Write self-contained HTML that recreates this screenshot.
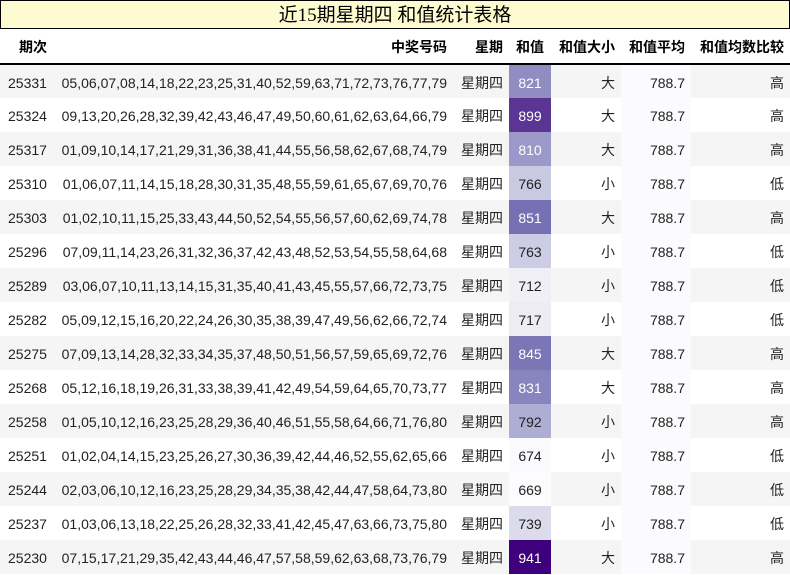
<!DOCTYPE html>
<html><head><meta charset="utf-8"><style>
body{margin:0;background:#fff;width:790px;height:575px;overflow:hidden;font-family:"Liberation Sans","Noto Sans CJK SC",sans-serif;color:#000}
.t{box-sizing:border-box;height:29px;border:1px solid #000;background:#fffbd0;text-align:center;font:19px/29px "Liberation Serif","Noto Sans CJK SC",serif}
table{border-collapse:collapse;width:790px;table-layout:fixed;font-size:14px}
th{height:35px;font-weight:bold;text-align:right;padding:2px 6px 0;border-bottom:2px solid #000;box-sizing:border-box}
td{height:34px;padding:2px 6px 0;box-sizing:border-box;text-align:right;white-space:nowrap;color:#222}
tr.o td{background:#f5f5f5}
td.a{background:#fbfbfe!important}
td.s{text-align:center}
td.w{color:#fff}
td.l{padding-left:8px;text-align:left}
</style></head><body>
<div class="t">近15期星期四 和值统计表格</div>
<table>
<colgroup><col style="width:55px"><col style="width:398px"><col style="width:56px"><col style="width:42px"><col style="width:70px"><col style="width:70px"><col style="width:99px"></colgroup>
<tr><th style="text-align:left;padding-left:19px">期次</th><th>中奖号码</th><th>星期</th><th style="text-align:center">和值</th><th>和值大小</th><th>和值平均</th><th>和值均数比较</th></tr>
<tr class="o"><td class="l">25331</td><td>05,06,07,08,14,18,22,23,25,31,40,52,59,63,71,72,73,76,77,79</td><td>星期四</td><td class="s w" style="background:#918dc2">821</td><td>大</td><td class="a">788.7</td><td>高</td></tr>
<tr><td class="l">25324</td><td>09,13,20,26,28,32,39,42,43,46,47,49,50,60,61,62,63,64,66,79</td><td>星期四</td><td class="s w" style="background:#5b3593">899</td><td>大</td><td class="a">788.7</td><td>高</td></tr>
<tr class="o"><td class="l">25317</td><td>01,09,10,14,17,21,29,31,36,38,41,44,55,56,58,62,67,68,74,79</td><td>星期四</td><td class="s w" style="background:#9c98c9">810</td><td>大</td><td class="a">788.7</td><td>高</td></tr>
<tr><td class="l">25310</td><td>01,06,07,11,14,15,18,28,30,31,35,48,55,59,61,65,67,69,70,76</td><td>星期四</td><td class="s" style="background:#c9c9e2">766</td><td>小</td><td class="a">788.7</td><td>低</td></tr>
<tr class="o"><td class="l">25303</td><td>01,02,10,11,15,25,33,43,44,50,52,54,55,56,57,60,62,69,74,78</td><td>星期四</td><td class="s w" style="background:#7770b3">851</td><td>大</td><td class="a">788.7</td><td>高</td></tr>
<tr><td class="l">25296</td><td>07,09,11,14,23,26,31,32,36,37,42,43,48,52,53,54,55,58,64,68</td><td>星期四</td><td class="s" style="background:#cccce4">763</td><td>小</td><td class="a">788.7</td><td>低</td></tr>
<tr class="o"><td class="l">25289</td><td>03,06,07,10,11,13,14,15,31,35,40,41,43,45,55,57,66,72,73,75</td><td>星期四</td><td class="s" style="background:#f0eff6">712</td><td>小</td><td class="a">788.7</td><td>低</td></tr>
<tr><td class="l">25282</td><td>05,09,12,15,16,20,22,24,26,30,35,38,39,47,49,56,62,66,72,74</td><td>星期四</td><td class="s" style="background:#edecf5">717</td><td>小</td><td class="a">788.7</td><td>低</td></tr>
<tr class="o"><td class="l">25275</td><td>07,09,13,14,28,32,33,34,35,37,48,50,51,56,57,59,65,69,72,76</td><td>星期四</td><td class="s w" style="background:#7c76b6">845</td><td>大</td><td class="a">788.7</td><td>高</td></tr>
<tr><td class="l">25268</td><td>05,12,16,18,19,26,31,33,38,39,41,42,49,54,59,64,65,70,73,77</td><td>星期四</td><td class="s w" style="background:#8884bd">831</td><td>大</td><td class="a">788.7</td><td>高</td></tr>
<tr class="o"><td class="l">25258</td><td>01,05,10,12,16,23,25,28,29,36,40,46,51,55,58,64,66,71,76,80</td><td>星期四</td><td class="s" style="background:#aeadd3">792</td><td>小</td><td class="a">788.7</td><td>高</td></tr>
<tr><td class="l">25251</td><td>01,02,04,14,15,23,25,26,27,30,36,39,42,44,46,52,55,62,65,66</td><td>星期四</td><td class="s" style="background:#fbfafc">674</td><td>小</td><td class="a">788.7</td><td>低</td></tr>
<tr class="o"><td class="l">25244</td><td>02,03,06,10,12,16,23,25,28,29,34,35,38,42,44,47,58,64,73,80</td><td>星期四</td><td class="s" style="background:#fcfbfd">669</td><td>小</td><td class="a">788.7</td><td>低</td></tr>
<tr><td class="l">25237</td><td>01,03,06,13,18,22,25,26,28,32,33,41,42,45,47,63,66,73,75,80</td><td>星期四</td><td class="s" style="background:#dcdbeb">739</td><td>小</td><td class="a">788.7</td><td>低</td></tr>
<tr class="o"><td class="l">25230</td><td>07,15,17,21,29,35,42,43,44,46,47,57,58,59,62,63,68,73,76,79</td><td>星期四</td><td class="s w" style="background:#3f007d">941</td><td>大</td><td class="a">788.7</td><td>高</td></tr>
</table>
</body></html>
